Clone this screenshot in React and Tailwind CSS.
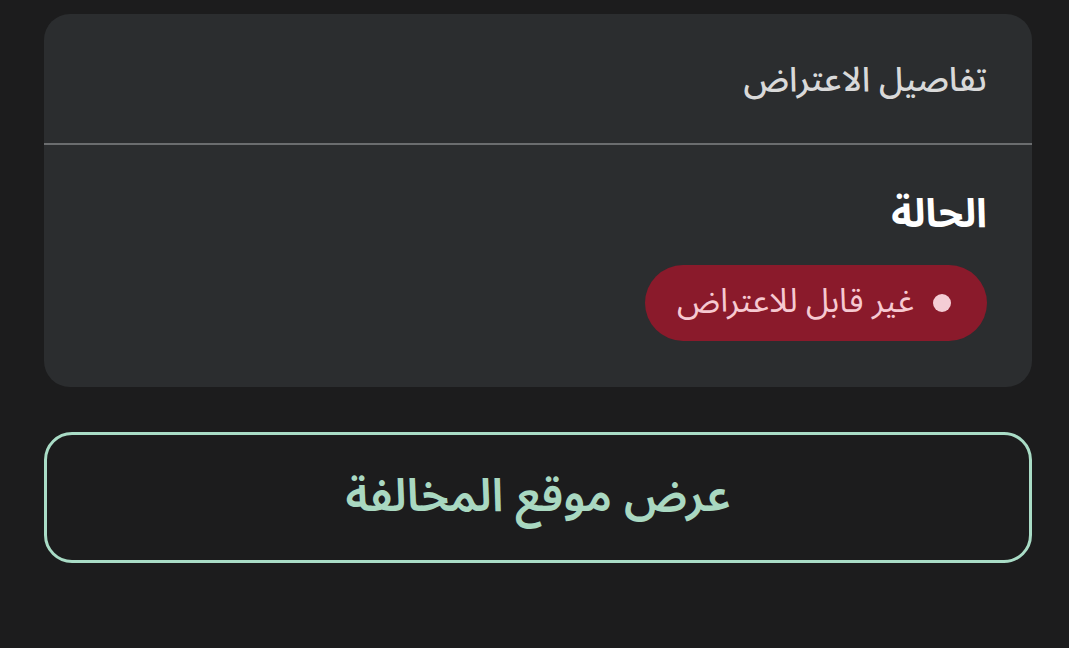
import React from 'react';

const font = { fontFamily: '"Noto Sans Arabic", "DejaVu Sans", "Noto Sans", sans-serif' };

export default function App() {
    return (
        <div dir="rtl" style={font} className="min-h-[648px] w-full bg-[#1c1c1d] pt-[14px] pl-[44px] pr-[37px]">
            {/* بطاقة تفاصيل الاعتراض */}
            <div className="h-[373px] rounded-[26px] bg-[#2b2d2f] overflow-hidden flex flex-col">
                <div className="h-[129px] flex items-center px-[45px] pt-[4px]">
                    <h3 className="text-[34px] text-[#d9d9d9] font-medium">تفاصيل الاعتراض</h3>
                </div>
                <div className="h-[2px] bg-[#6b6d6f]"></div>
                <div className="px-[45px] pt-[42px] flex flex-col items-start gap-[22px]">
                    <span className="text-[40px] font-bold text-white leading-[56px]">الحالة</span>
                    <div className="h-[76px] rounded-full bg-[#8a1a2b] flex items-center gap-[19px] pr-[36px] pl-[32px]">
                        <span className="w-[18px] h-[18px] rounded-full bg-[#f4cdd5]"></span>
                        <span className="text-[33px] text-[#f6c9d1] leading-none pb-[4px]">غير قابل للاعتراض</span>
                    </div>
                </div>
            </div>

            {/* زر عرض الموقع */}
            <button className="mt-[45px] w-full h-[131px] rounded-[28px] border-[3px] border-[#a9dcc6] bg-transparent flex items-center justify-center">
                <span className="text-[46px] font-semibold text-[#a9d8c1] pb-[2px]">عرض موقع المخالفة</span>
            </button>
        </div>
    );
}
